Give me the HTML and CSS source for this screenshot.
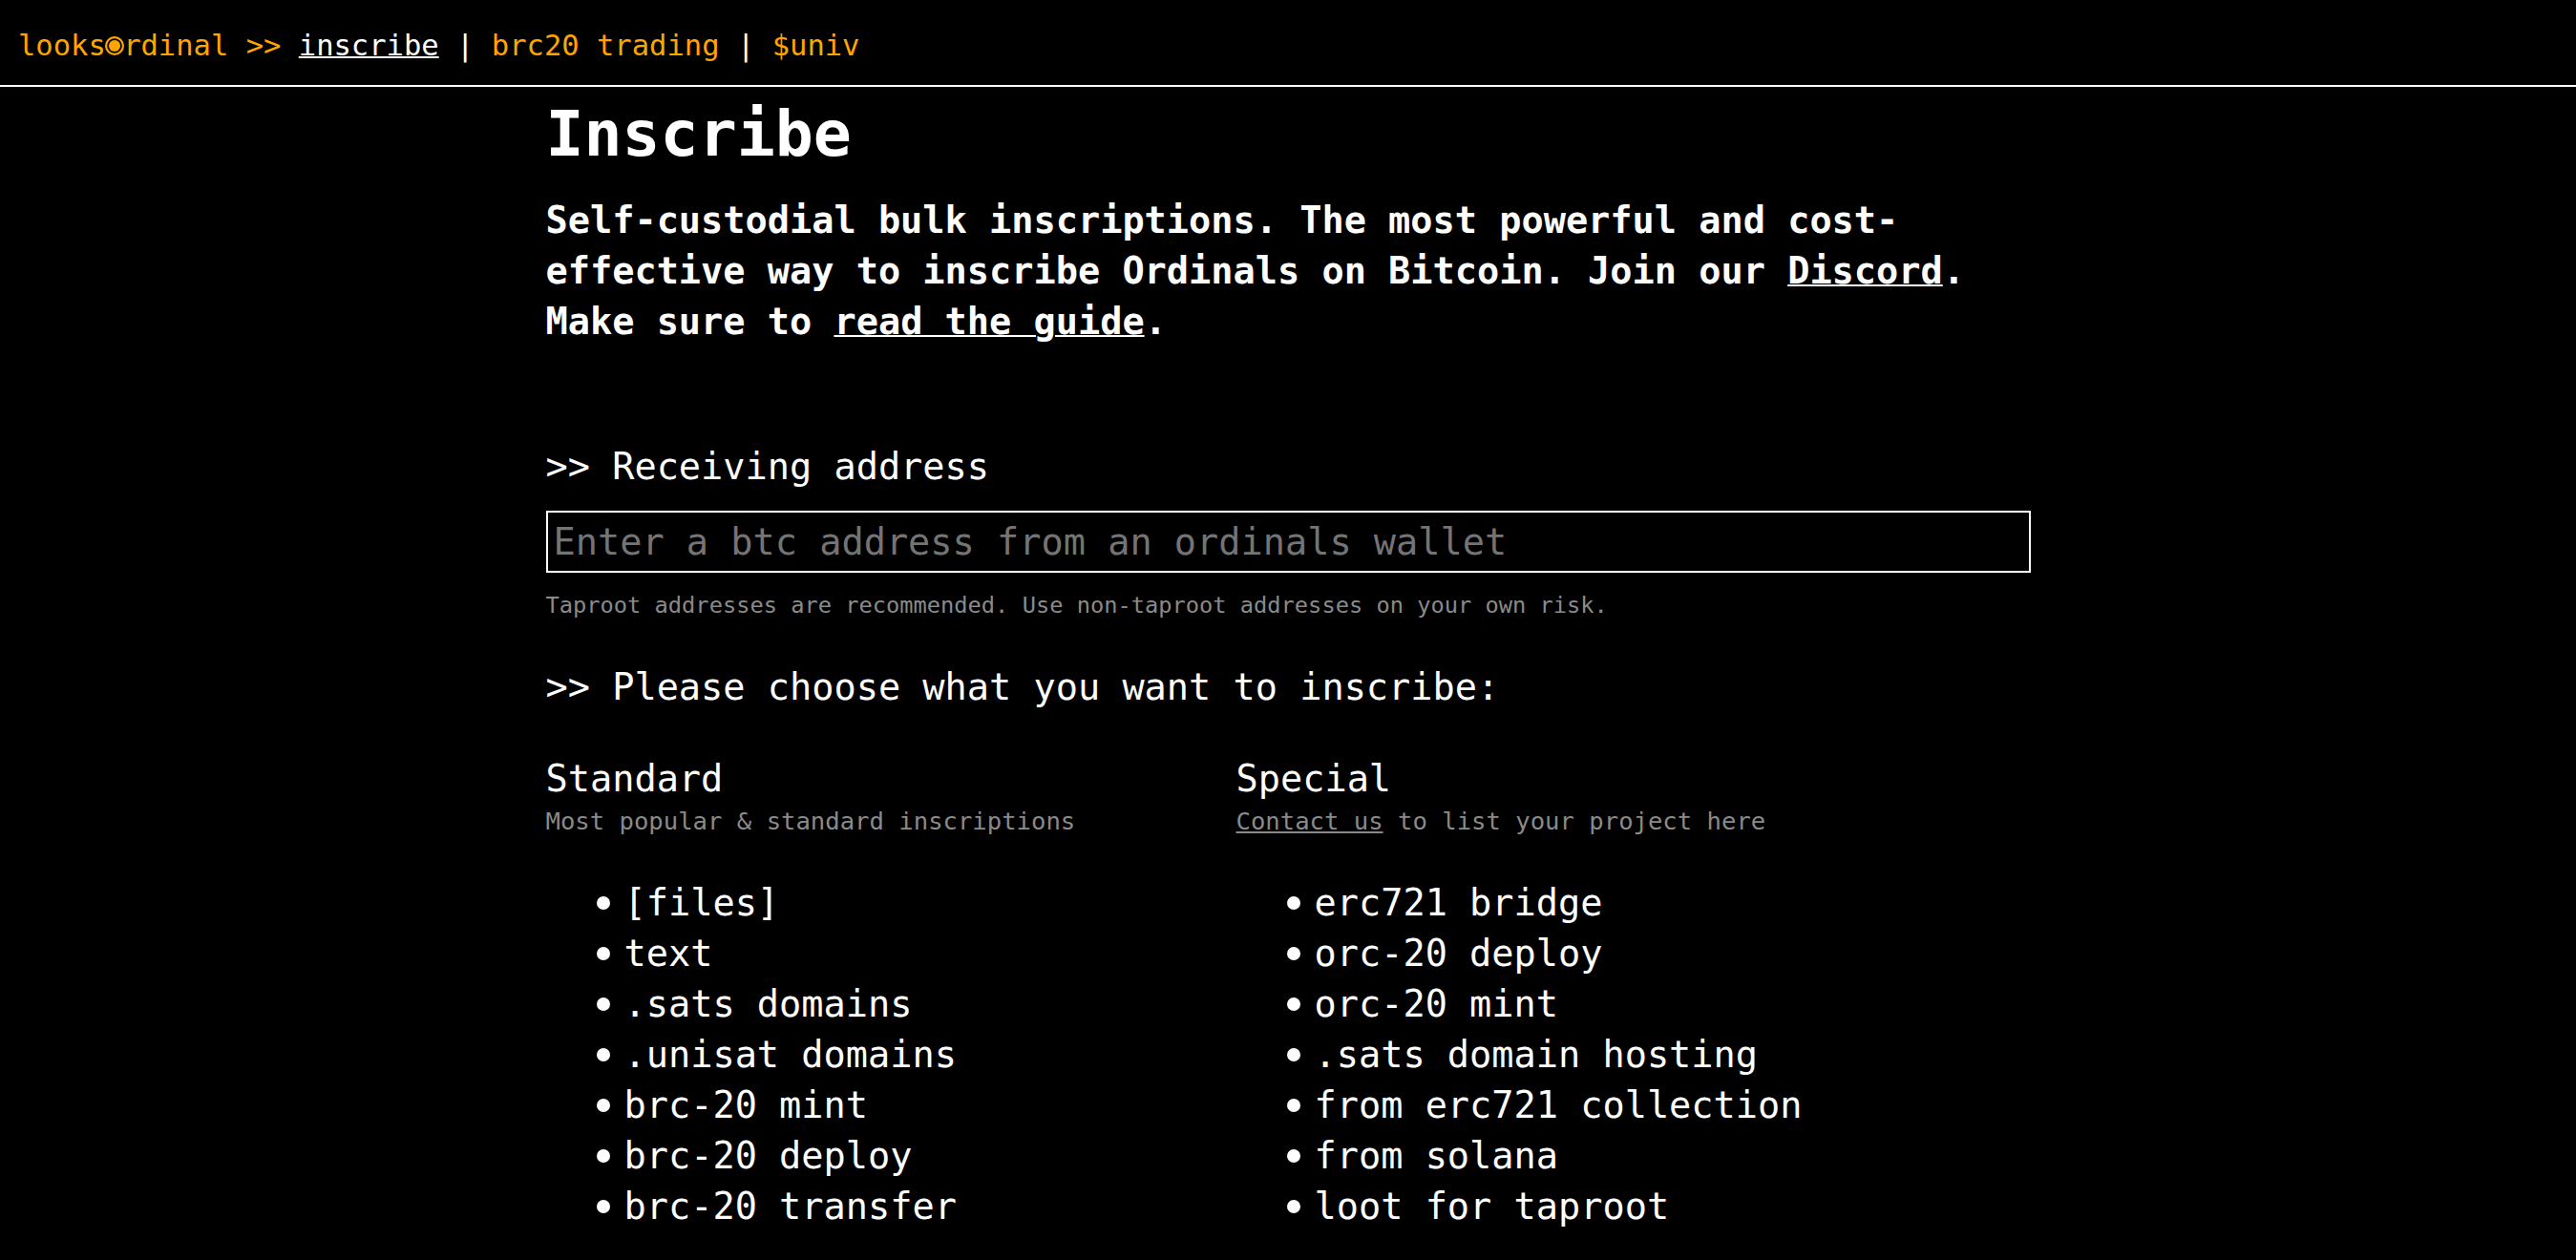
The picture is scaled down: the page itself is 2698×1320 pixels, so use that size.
FILE: index.html
```html
<!DOCTYPE html>
<html lang="en">
<head>
<meta charset="utf-8">
<title>Inscribe</title>
<link rel="stylesheet" href="styles.css">
</head>
<body>
<header class="topbar">
  <nav class="nav">
    <a class="brand" href="#">looks<svg class="brand-dot" viewBox="0 0 20 20" aria-hidden="true"><circle cx="10" cy="10" r="8.9" fill="none" stroke="#ffa500" stroke-width="2.2"/><circle cx="10" cy="10" r="6" fill="#ffa500"/></svg>rdinal &gt;&gt;</a>
    <a class="nav-current" href="#">inscribe</a>
    <span class="sep">|</span>
    <a class="nav-link" href="#">brc20 trading</a>
    <span class="sep">|</span>
    <a class="nav-link" href="#">$univ</a>
  </nav>
</header>
<main class="page">
  <h1 class="title">Inscribe</h1>
  <p class="lead">Self-custodial bulk inscriptions. The most powerful and cost-effective way to inscribe Ordinals on Bitcoin. Join our <a href="#">Discord</a>. Make sure to <a href="#">read the guide</a>.</p>

  <h2 class="label label-first">&gt;&gt; Receiving address</h2>
  <input class="address" type="text" placeholder="Enter a btc address from an ordinals wallet">
  <p class="hint">Taproot addresses are recommended. Use non-taproot addresses on your own risk.</p>

  <h2 class="label label-second">&gt;&gt; Please choose what you want to inscribe:</h2>

  <div class="choices">
    <div class="col">
      <h3 class="col-title">Standard</h3>
      <p class="col-sub">Most popular &amp; standard inscriptions</p>
      <ul class="items">
        <li>[files]</li>
        <li>text</li>
        <li>.sats domains</li>
        <li>.unisat domains</li>
        <li>brc-20 mint</li>
        <li>brc-20 deploy</li>
        <li>brc-20 transfer</li>
      </ul>
    </div>
    <div class="col">
      <h3 class="col-title">Special</h3>
      <p class="col-sub"><a href="#">Contact us</a> to list your project here</p>
      <ul class="items">
        <li>erc721 bridge</li>
        <li>orc-20 deploy</li>
        <li>orc-20 mint</li>
        <li>.sats domain hosting</li>
        <li>from erc721 collection</li>
        <li>from solana</li>
        <li>loot for taproot</li>
      </ul>
    </div>
  </div>
</main>
</body>
</html>
```

FILE: styles.css
```css
html, body {
  margin: 0;
  padding: 0;
  background: #000;
}

body {
  color: #fff;
  font-family: "DejaVu Sans Mono", "Liberation Mono", monospace;
}

a {
  color: inherit;
}

/* top navigation */
.topbar {
  padding: 25px 19px 19px;
  border-bottom: 2px solid #fff;
}

.nav {
  font-size: 30.5px;
  line-height: 45px;
  white-space: nowrap;
}

.brand,
.nav-link {
  color: #ffa500;
  text-decoration: none;
}

.brand-dot {
  display: inline-block;
  width: 20px;
  height: 20px;
  margin: 0 -0.8px 0 -0.9px;
  overflow: visible;
  vertical-align: baseline;
}

.nav-current {
  color: #fff;
  text-decoration: underline;
  text-decoration-thickness: 2px;
}

.sep {
  color: #fff;
}

/* main column */
.page {
  width: 1555px;
  margin: 0 auto;
}

.title {
  margin: 9px 0 0;
  font-size: 66.5px;
  line-height: 80px;
  font-weight: bold;
}

.lead {
  margin: 24px 0 0;
  font-size: 38.6px;
  line-height: 53px;
  font-weight: bold;
}

.lead a {
  text-decoration-thickness: 2px;
}

.label {
  margin: 0;
  font-size: 38.6px;
  line-height: 53px;
  font-weight: normal;
}

.label-first {
  margin-top: 99px;
}

.label-second {
  margin-top: 42px;
}

.address {
  display: block;
  box-sizing: border-box;
  width: 100%;
  height: 65px;
  margin: 20px 0 0;
  padding: 0 6px;
  background: #000;
  color: #fff;
  border: 2px solid #fff;
  border-radius: 0;
  outline: none;
  font-family: inherit;
  font-size: 38.6px;
}

.address::placeholder {
  color: #747474;
}

.hint {
  margin: 18px 0 0;
  font-size: 23.7px;
  line-height: 33px;
  color: #8a8a8a;
}

/* choices */
.choices {
  display: grid;
  grid-template-columns: 723px 1fr;
  margin-top: 43px;
}

.col-title {
  margin: 0;
  font-size: 38.6px;
  line-height: 53px;
  font-weight: normal;
}

.col-sub {
  margin: 0;
  font-size: 25.6px;
  line-height: 36px;
  color: #8a8a8a;
}

.items {
  list-style: none;
  margin: 41px 0 0;
  padding: 0 0 0 54px;
  font-size: 38.6px;
  line-height: 53px;
}

.items li {
  display: flex;
}

.items li::before {
  content: "";
  flex: 0 0 14px;
  height: 14px;
  margin: 20px 15px 0 -1px;
  border-radius: 50%;
  background: #fff;
}
```
